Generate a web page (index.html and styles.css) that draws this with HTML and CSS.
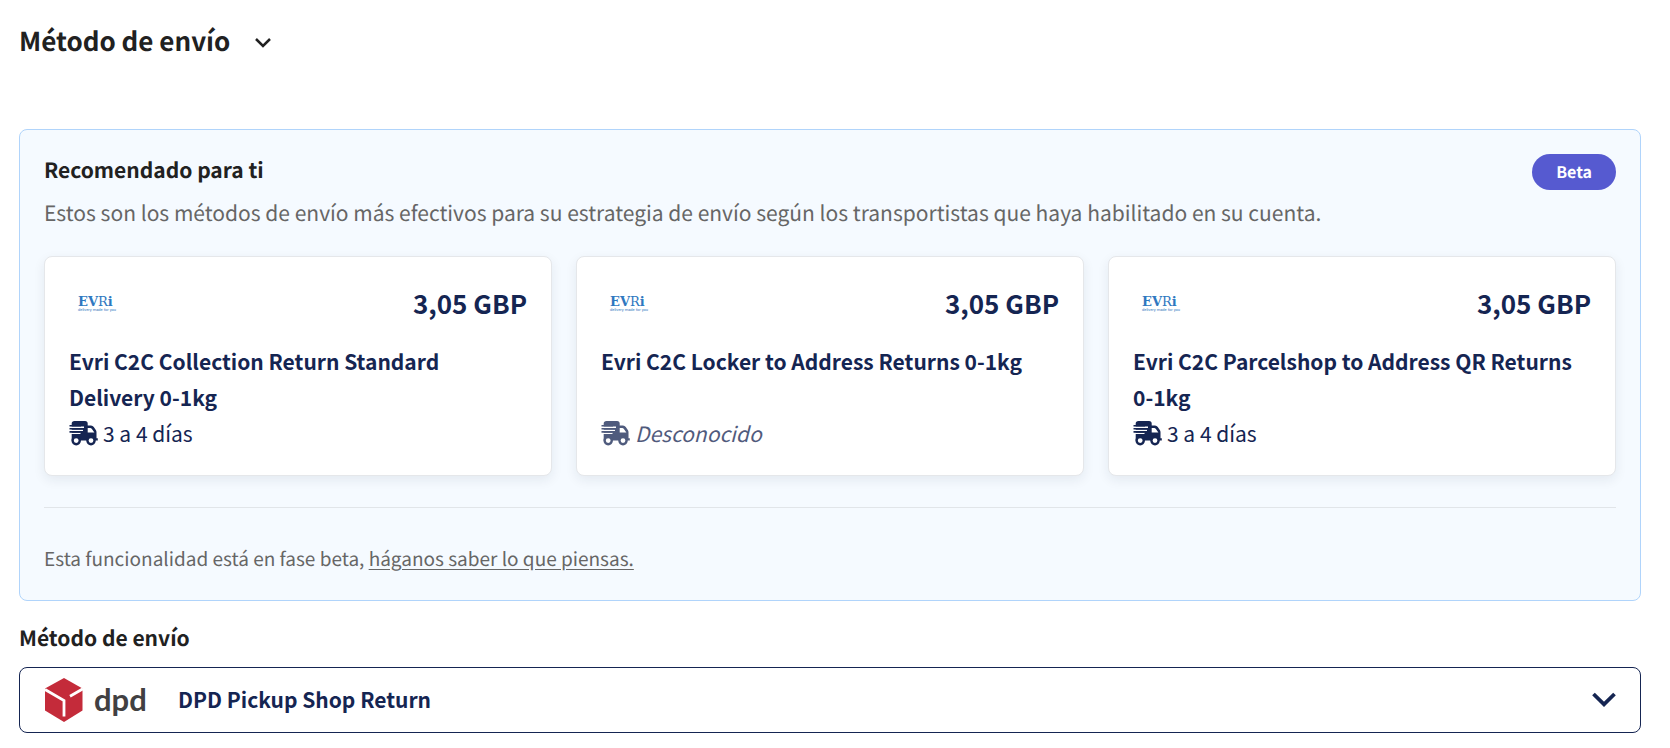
FILE: index.html
```html
<!DOCTYPE html>
<html lang="es">
<head>
<meta charset="utf-8">
<meta name="viewport" content="width=device-width, initial-scale=1">
<title>Método de envío</title>
<link rel="stylesheet" href="styles.css">
</head>
<body>
<svg class="defs" aria-hidden="true">
  <symbol id="truck" viewBox="0 0 30 26">
    <path fill="currentColor" d="M5.500 1H16q2.700 0 2.700 2.500v2H22q1.700 0 2.800 1.600l2 3q.7 1 .7 2.200V18.300h1.300v2.200H2.700V3.500Q2.700 1 5.500 1z"/>
    <path fill="#fff" d="M18.700 8h2.500q.9 0 1.500.8l2.700 3.700h-6.700zM0 6.600h15v1.300H0zM0 9.700h14v1.300H0zM0 12.800h11.500v1.300H0z"/>
    <path fill="none" stroke="currentColor" stroke-width="1.600" d="M.5 5.800H12M.5 8.800H14M.5 11.900h11"/>
    <circle cx="7.200" cy="20.600" r="3.600" fill="#fff" stroke="currentColor" stroke-width="2.400"/>
    <circle cx="22" cy="20.600" r="3.600" fill="#fff" stroke="currentColor" stroke-width="2.400"/>
  </symbol>
</svg>
<main class="page">
  <header class="page-head">
    <h1 class="title">Método de envío</h1>
    <button class="collapse" type="button" aria-label="Contraer sección">
      <svg width="18" height="12" viewBox="0 0 18 12"><path d="M2 2l7 7 7-7" fill="none" stroke="#212121" stroke-width="2.500"/></svg>
    </button>
  </header>

  <section class="panel">
    <div class="panel-head">
      <h2 class="subtitle">Recomendado para ti</h2>
      <span class="badge">Beta</span>
    </div>
    <p class="intro">Estos son los métodos de envío más efectivos para su estrategia de envío según los transportistas que haya habilitado en su cuenta.</p>
    <div class="cards">
      <button class="card" type="button">
        <span class="card-top">
          <svg class="evri" viewBox="0 0 56 32" role="img" aria-label="Evri"><text class="evri-word" x="9" y="19">EV<tspan class="evri-thin">R</tspan>i</text><text class="evri-tag" x="9" y="24">delivery made for you</text></svg>
          <span class="price">3,05 GBP</span>
        </span>
        <span class="name">Evri C2C Collection Return Standard Delivery 0-1kg</span>
        <span class="time"><svg class="truck"><use href="#truck"/></svg><span>3 a 4 días</span></span>
      </button>
      <button class="card" type="button">
        <span class="card-top">
          <svg class="evri" viewBox="0 0 56 32" role="img" aria-label="Evri"><text class="evri-word" x="9" y="19">EV<tspan class="evri-thin">R</tspan>i</text><text class="evri-tag" x="9" y="24">delivery made for you</text></svg>
          <span class="price">3,05 GBP</span>
        </span>
        <span class="name">Evri C2C Locker to Address Returns 0-1kg</span>
        <span class="time unknown"><svg class="truck"><use href="#truck"/></svg><span>Desconocido</span></span>
      </button>
      <button class="card" type="button">
        <span class="card-top">
          <svg class="evri" viewBox="0 0 56 32" role="img" aria-label="Evri"><text class="evri-word" x="9" y="19">EV<tspan class="evri-thin">R</tspan>i</text><text class="evri-tag" x="9" y="24">delivery made for you</text></svg>
          <span class="price">3,05 GBP</span>
        </span>
        <span class="name">Evri C2C Parcelshop to Address QR Returns 0-1kg</span>
        <span class="time"><svg class="truck"><use href="#truck"/></svg><span>3 a 4 días</span></span>
      </button>
    </div>
    <p class="feedback">Esta funcionalidad está en fase beta, <a class="link" href="#">háganos saber lo que piensas.</a></p>
  </section>

  <h2 class="subtitle field-label" id="method-label">Método de envío</h2>
  <button class="select" type="button" aria-haspopup="listbox" aria-labelledby="method-label method-value">
    <svg class="dpd" width="102" height="46" viewBox="0 0 102 46" role="img" aria-label="DPD">
      <path fill="#c42b3a" d="M20 1l18.500 10.500v22L20 45 1 33.500v-22z"/>
      <path fill="none" stroke="#fff" stroke-width="2.800" d="M1 12.500l19 11V39.500M26 19.200l13-7.500"/>
      <text class="dpd-text" x="50" y="34">dpd</text>
    </svg>
    <span class="value" id="method-value">DPD Pickup Shop Return</span>
    <svg class="arrow" width="24" height="16" viewBox="0 0 24 16"><path d="M1.500 2L12 12.300 22.500 2" fill="none" stroke="#152552" stroke-width="3.800"/></svg>
  </button>
</main>
</body>
</html>
```

FILE: styles.css
```css
* { box-sizing: border-box; }
body {
  margin: 0;
  background: #fff;
  color: #212121;
  font-family: "Noto Sans CJK SC", "Open Sans", sans-serif;
  font-size: 21px;
  line-height: 36px;
  text-rendering: geometricPrecision;
}
h1, h2, p { margin: 0; }
button {
  font: inherit;
  color: inherit;
  cursor: pointer;
}
.defs { position: absolute; width: 0; height: 0; }
.page { padding: 20px 29px 0 19px; }
.page-head {
  display: flex;
  align-items: center;
  gap: 24px;
  margin-bottom: 67px;
}
.title { font-size: 26px; line-height: 42px; font-weight: 700; }
.collapse {
  display: flex;
  padding: 4px 0 0;
  border: 0;
  background: none;
}
.panel {
  padding: 24px;
  border: 1px solid #b0d4fb;
  border-radius: 8px;
  background: #f5faff;
}
.panel-head {
  display: flex;
  align-items: flex-start;
  justify-content: space-between;
}
.subtitle { font-size: 21px; line-height: 32px; font-weight: 700; }
.badge {
  padding: 0 24px 2px;
  border-radius: 18px;
  background: #565ad0;
  color: #fff;
  font-size: 16px;
  line-height: 34px;
  font-weight: 700;
}
.intro { margin-top: 5px; color: #666; }
.cards {
  display: grid;
  grid-template-columns: repeat(3, 1fr);
  gap: 24px;
  margin-top: 25px;
}
.card {
  display: flex;
  flex-direction: column;
  padding: 24px;
  border: 1px solid #e5e7ea;
  border-radius: 8px;
  background: #fff;
  box-shadow: 0 4px 12px rgba(20, 35, 60, 0.08);
  color: #152552;
  text-align: left;
}
.card-top {
  display: flex;
  align-items: center;
  justify-content: space-between;
  margin-bottom: 18px;
}
.evri { width: 56px; height: 32px; fill: #2f78c0; }
.evri-word { font: 700 13px "DejaVu Serif", serif; }
.evri-thin { font-weight: 400; }
.evri-tag { font: 400 4px Roboto, sans-serif; }
.price { font-size: 26px; line-height: 44px; font-weight: 700; }
.name { flex: 1; font-weight: 700; min-height: 72px; }
.time { display: flex; align-items: center; gap: 4px; }
.truck { width: 30px; height: 26px; }
.unknown { opacity: 0.75; font-style: italic; }
.feedback {
  margin-top: 31px;
  padding-top: 33px;
  border-top: 1px solid #e1e5e9;
  color: #666;
  font-size: 19px;
  line-height: 35px;
}
.link { color: inherit; text-underline-offset: 3px; }
.field-label { margin: 21px 0 13px; }
.select {
  display: flex;
  align-items: center;
  width: 100%;
  padding: 9px 24px;
  border: 1px solid #152552;
  border-radius: 8px;
  background: #fff;
  color: #152552;
  font-weight: 700;
  text-align: left;
}
.dpd-text { font: 700 31px Lato, sans-serif; fill: #414042; }
.value { flex: 1; margin-left: 32px; line-height: 32px; padding-bottom: 2px; }
```
